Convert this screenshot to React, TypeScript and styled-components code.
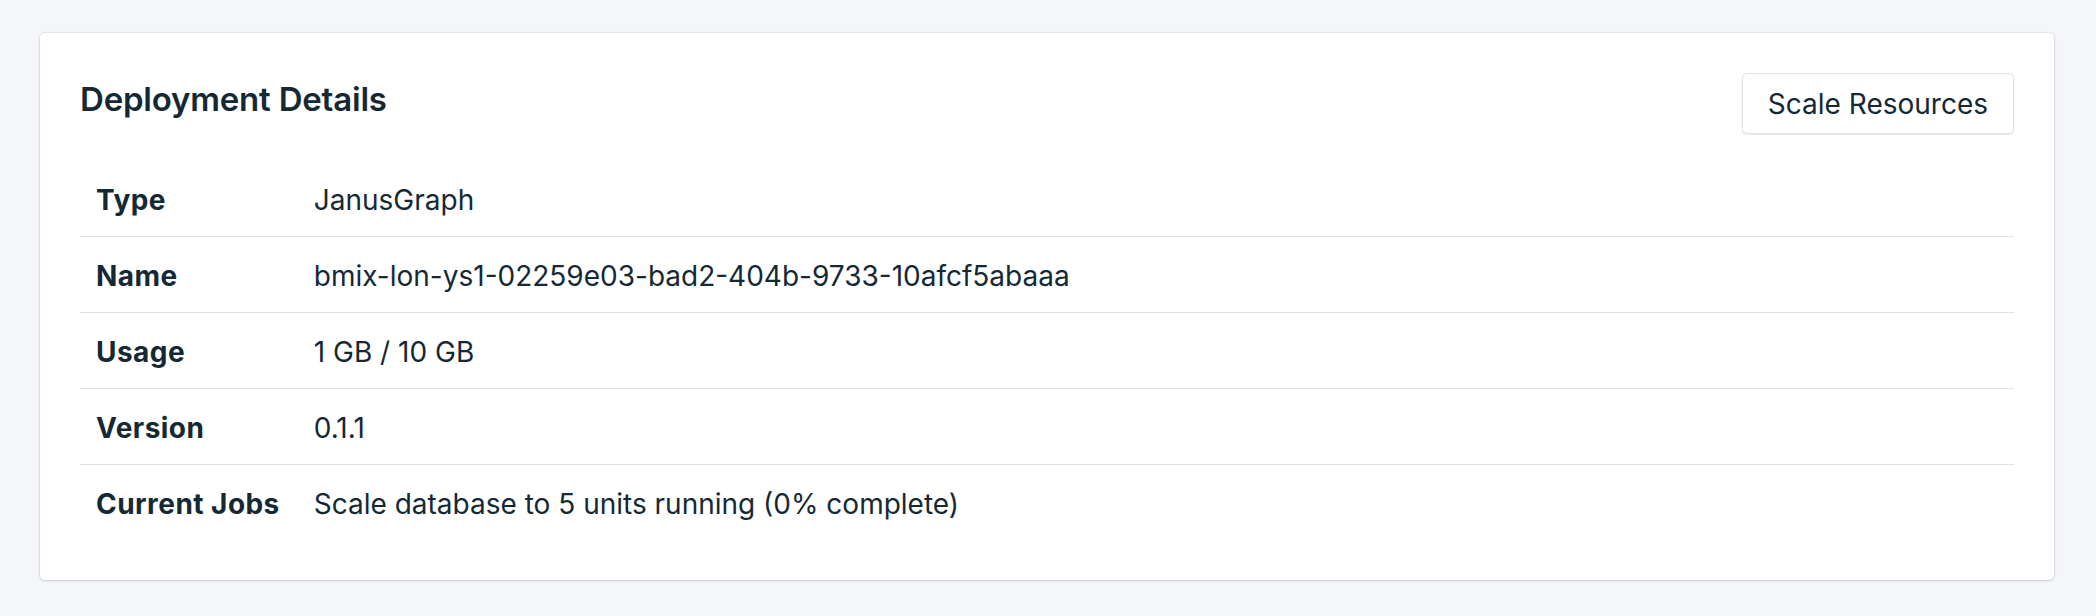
import React from "react";
import styled, { createGlobalStyle } from "styled-components";

const Global = createGlobalStyle`
  html, body { margin: 0; padding: 0; background: #f4f6f9; }
  body { font-family: Inter, "Noto Sans", sans-serif; color: #152935; -webkit-font-smoothing: antialiased; }
`;

const Page = styled.div`
  padding: 33px 42px 36px 40px;
`;

const Card = styled.section`
  background: #ffffff;
  border-radius: 5px;
  box-shadow: 0 0 0 1px rgba(20, 40, 60, 0.06), 0 1px 3px rgba(20, 40, 60, 0.14);
  padding: 40px;
`;

const Header = styled.div`
  display: flex;
  justify-content: space-between;
  align-items: flex-start;
`;

const Title = styled.h2`
  margin: 6px 0 0;
  font-size: 33px;
  line-height: 40px;
  font-weight: 600;
  letter-spacing: -0.2px;
`;

const Button = styled.button`
  height: 61px;
  padding: 0 25px;
  background: #ffffff;
  border: 1px solid #dfe3e6;
  border-radius: 5px;
  box-shadow: 0 1px 2px rgba(20, 40, 60, 0.1);
  font-family: inherit;
  font-size: 28px;
  font-weight: 400;
  color: #152935;
  cursor: pointer;
`;

const Table = styled.table`
  margin-top: 27px;
  width: 100%;
  border-collapse: collapse;
`;

const Row = styled.tr<{ $last?: boolean }>`
  border-bottom: ${(p) => (p.$last ? "none" : "1px solid #dfe3e6")};
`;

const Label = styled.th`
  height: 73px;
  padding: 2px 17px 0 16px;
  text-align: left;
  white-space: nowrap;
  font-size: 28px;
  font-weight: 700;
  letter-spacing: 0.45px;
  width: 1%;
`;

const Value = styled.td`
  height: 73px;
  padding: 2px 16px 0 17px;
  font-size: 28px;
  font-weight: 400;
`;

const rows: [string, string][] = [
  ["Type", "JanusGraph"],
  ["Name", "bmix-lon-ys1-02259e03-bad2-404b-9733-10afcf5abaaa"],
  ["Usage", "1 GB / 10 GB"],
  ["Version", "0.1.1"],
  ["Current Jobs", "Scale database to 5 units running (0% complete)"],
];

export default function App() {
  return (
    <>
      <Global />
      <Page>
        <Card>
          <Header>
            <Title>Deployment Details</Title>
            <Button>Scale Resources</Button>
          </Header>
          <Table>
            <tbody>
              {rows.map(([k, v], i) => (
                <Row key={k} $last={i === rows.length - 1}>
                  <Label>{k}</Label>
                  <Value>{v}</Value>
                </Row>
              ))}
            </tbody>
          </Table>
        </Card>
      </Page>
    </>
  );
}
